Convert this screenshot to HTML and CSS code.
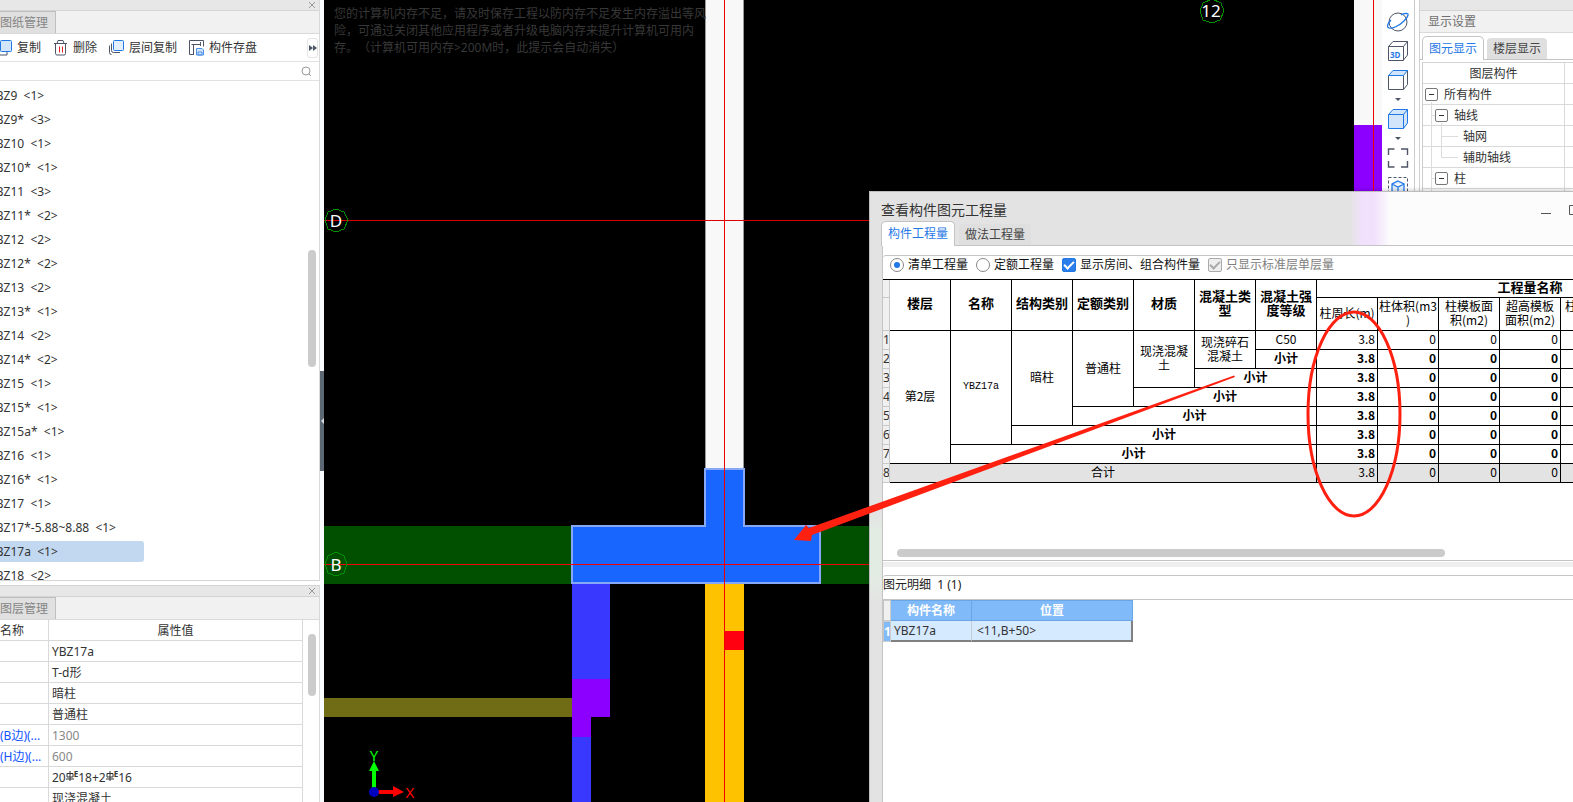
FILE: index.html
```html
<!DOCTYPE html>
<html lang="zh-CN">
<head>
<meta charset="utf-8">
<title>查看构件图元工程量</title>
<link rel="stylesheet" href="styles.css">
</head>
<body>
<div class="app">
  <aside class="left">
    <section class="pane components">
      <div class="grip"><button class="close" aria-label="关闭"><svg width="8" height="8" viewBox="0 0 8 8"><path d="M1 1L7 7M7 1L1 7"/></svg></button></div>
      <div class="tabbar"><button class="dock-tab">图纸管理</button></div>
      <div class="tools">
        <button class="tool"><svg width="16" height="16" viewBox="0 0 16 16"><path d="M5 4H1v11h10v-3" fill="none" stroke="#4d5566"/><rect x="4.500" y=".5" width="11" height="11" rx="1" fill="#d3e5fb" stroke="#1f78e6"/></svg>复制</button>
        <button class="tool"><svg width="16" height="16" viewBox="0 0 16 16" fill="none" stroke="#4d5566"><path d="M2 3.500H15M5 3.500L6 .5h5l1 3M3.500 3.500v10q0 1.500 1.500 1.500h7q1.500 0 1.500-1.500v-10"/><path d="M7.500 6.500v6M10.500 6.500v6" stroke="#e02020"/></svg>删除</button>
        <button class="tool"><svg width="16" height="16" viewBox="0 0 16 16" fill="none" stroke="#4d5566"><path d="M1.500 5.500v7q0 2 2 2M3.500 3.500v7q0 2 2 2h6.500"/><rect x="5.500" y=".5" width="10" height="10" rx="1" fill="#e4effd" stroke="#1f78e6"/></svg>层间复制</button>
        <button class="tool"><svg width="16" height="16" viewBox="0 0 16 16" fill="none" stroke="#4d5566"><path d="M6 14.500H1.500v-14h14v6M5.500 14V4M3.500 4.500h9M12.500 2v4"/><path d="M8.500 8.500h5.500l1.500 1.500v5h-7zM10 12h4v3h-4z" fill="#d3e5fb" stroke="#4a90e8"/></svg>构件存盘</button>
        <button class="more" aria-label="更多"><svg width="8" height="6" viewBox="0 0 8 6"><path d="M0 0L4 3L0 6zM4 0L8 3L4 6z" fill="#4d5566"/></svg></button>
      </div>
      <div class="search"><input type="text" aria-label="搜索构件"><svg width="11" height="11" viewBox="0 0 11 11" fill="none" stroke="#999"><circle cx="5" cy="5" r="4"/><path d="M8 8L10 10"/></svg></div>
      <div class="list-wrap">
        <ul class="list">
          <li>YBZ9  &lt;1&gt;</li><li>YBZ9*  &lt;3&gt;</li><li>YBZ10  &lt;1&gt;</li><li>YBZ10*  &lt;1&gt;</li><li>YBZ11  &lt;3&gt;</li><li>YBZ11*  &lt;2&gt;</li><li>YBZ12  &lt;2&gt;</li><li>YBZ12*  &lt;2&gt;</li><li>YBZ13  &lt;2&gt;</li><li>YBZ13*  &lt;1&gt;</li><li>YBZ14  &lt;2&gt;</li><li>YBZ14*  &lt;2&gt;</li><li>YBZ15  &lt;1&gt;</li><li>YBZ15*  &lt;1&gt;</li><li>YBZ15a*  &lt;1&gt;</li><li>YBZ16  &lt;1&gt;</li><li>YBZ16*  &lt;1&gt;</li><li>YBZ17  &lt;1&gt;</li><li>YBZ17*-5.88~8.88  &lt;1&gt;</li><li class="selected">YBZ17a  &lt;1&gt;</li><li>YBZ18  &lt;2&gt;</li>
        </ul>
        <div class="thumb list-thumb"></div>
      </div>
    </section>
    <section class="pane props">
      <div class="grip"><button class="close" aria-label="关闭"><svg width="8" height="8" viewBox="0 0 8 8"><path d="M1 1L7 7M7 1L1 7"/></svg></button></div>
      <div class="tabbar"><button class="dock-tab">图层管理</button></div>
      <div class="props-wrap">
        <table class="prop-table">
          <colgroup><col class="c-name"><col></colgroup>
          <tr><th class="first">名称</th><th>属性值</th></tr>
          <tr><td></td><td>YBZ17a</td></tr>
          <tr><td></td><td>T-d形</td></tr>
          <tr><td></td><td>暗柱</td></tr>
          <tr><td></td><td>普通柱</td></tr>
          <tr><td class="key">(B边)(...</td><td class="dim">1300</td></tr>
          <tr><td class="key">(H边)(...</td><td class="dim">600</td></tr>
          <tr><td></td><td>20<svg class="rebar" width="8" height="10" viewBox="0 0 8 10"><path d="M4 0V10M1 2.500h6v3.500h-6zM0 8h8"/></svg><sup>E</sup>18+2<svg class="rebar" width="8" height="10" viewBox="0 0 8 10"><path d="M4 0V10M1 2.500h6v3.500h-6zM0 8h8"/></svg><sup>E</sup>16</td></tr>
          <tr><td></td><td>现浇混凝土</td></tr>
        </table>
        <div class="thumb prop-thumb"></div>
      </div>
    </section>
  </aside>
  <div class="splitter"><button class="handle" aria-label="收起"><svg width="4" height="6" viewBox="0 0 4 6"><path d="M4 0L1 3L4 6z" fill="#d5d9dd"/></svg></button></div>

  <main class="canvas">
    <svg class="drawing" width="100%" height="100%" shape-rendering="crispEdges">
      <rect x="0" y="526" width="600" height="58" fill="#005000"/>
      <rect x="381" y="0" width="39" height="470" fill="#f8f8f8"/>
      <path d="M381.500 0V470M419.500 0V470" stroke="#999"/>
      <rect x="1030" y="0" width="29" height="126" fill="#f8f8f8"/>
      <rect x="1030" y="125" width="29" height="130" fill="#8b00ff"/>
      <rect x="248" y="583" width="38" height="97" fill="#3838ff"/>
      <path d="M248 679h38v38h-19v20h-19z" fill="#8b00ff"/>
      <rect x="248" y="737" width="19" height="300" fill="#3838ff"/>
      <rect x="0" y="698" width="248" height="19" fill="#6f6c15"/>
      <rect x="381" y="583" width="39" height="500" fill="#ffc200"/>
      <rect x="400" y="631" width="20" height="19" fill="#ff0010"/>
      <path d="M248 526H381V469H420V526H496V583H248z" fill="#1966ff" stroke="#86a8f7" stroke-width="2"/>
      <path d="M0 220.500H600" stroke="#d80000"/><path d="M0 564.500H600M400.500 0V1000M1049.500 0V255" stroke="#f00000"/>
      <g fill="none" stroke="#009000">
        <path d="M1 220L4 212L12 209L20 212L24 220L20 229L12 232L4 229zM1 564L4 556L12 552L20 556L23 564L20 573L12 576L4 573zM876 11L879 3L888-1L897 3L900 11L896 20L888 23L879 20z"/>
      </g>
      <g class="axis-label"><text x="12" y="227">D</text><text x="12" y="571">B</text><text x="887" y="17">12</text></g>
      <g shape-rendering="auto">
        <path d="M48 792V771H45L50 761L55 771H52V792z" fill="#0f0"/>
        <path d="M50 790H69V786L80 792L69 797V794H50z" fill="#f00"/>
        <circle cx="50" cy="792" r="5" fill="#0000bf"/>
        <text class="axis-y" x="50" y="761">Y</text>
        <text class="axis-x" x="86" y="798">X</text>
      </g>
    </svg>
    <p class="warning">您的计算机内存不足，请及时保存工程以防内存不足发生内存溢出等风险，可通过关闭其他应用程序或者升级电脑内存来提升计算机可用内存。（计算机可用内存&gt;200M时，此提示会自动消失）</p>
  </main>

  <nav class="viewbar">
    <button aria-label="动态观察"><svg width="22" height="22" viewBox="0 0 22 22" fill="none" stroke="#4d5566"><circle cx="11" cy="11" r="9"/><path d="M4 9C1 12-1 16 2 17S12 15 17 10S22 2 19 2.500S15 3 14 4" stroke="#1f78e6" stroke-width="1.300"/></svg></button>
    <button aria-label="三维"><svg width="22" height="22" viewBox="0 0 22 22" fill="none" stroke="#4d5566"><path d="M1.500 6.500h15v14h-15zM1.500 6.500L6 1.500h14.500v13.500L16.500 20M16.500 6.500L20.500 1.500"/><text class="cube-text" x="3" y="18">3D</text></svg></button>
    <button aria-label="俯视"><svg width="22" height="22" viewBox="0 0 22 22" fill="none" stroke="#4d5566"><path d="M1.500 6.500h15v14h-15zM16.500 20.500L20.500 15.500V1.500"/><path d="M1.500 6.500L6 1.500h14.500L16.500 6.500z" fill="#d3e5fb" stroke="#1f78e6"/></svg></button>
    <i class="drop"></i>
    <button aria-label="着色"><svg width="22" height="22" viewBox="0 0 22 22" fill="#d3e5fb" stroke="#1f78e6"><path d="M1.500 6.500L6 1.500h14.500v13.500L16.500 20.500h-15zM1.500 6.500h15v14M16.500 6.500L20.500 1.500"/></svg></button>
    <i class="drop"></i>
    <button aria-label="全屏"><svg width="22" height="22" viewBox="0 0 22 22" fill="none" stroke="#4d5566" stroke-width="1.400"><path d="M1.500 8V2h6M14 2h6.500v6M20.500 14v6H14M7.500 20h-6v-6"/></svg></button>
    <button aria-label="选择"><svg width="22" height="22" viewBox="0 0 22 22" fill="none" stroke="#4d5566"><rect x="1.500" y="1.500" width="19" height="19" stroke-dasharray="3 2"/><path d="M11 5L17 8v7l-6 3l-6-3V8zM5 8l6 3l6-3M11 11v7" fill="#e4effd" stroke="#1f78e6" stroke-width="1.300"/></svg></button>
  </nav>

  <aside class="right">
    <div class="grip"></div>
    <h2 class="right-title">显示设置</h2>
    <div class="tabs right-tabs"><button class="tab active">图元显示</button><button class="tab">楼层显示</button></div>
    <div class="tree-wrap">
      <table class="tree">
        <colgroup><col class="c-tree"><col></colgroup>
        <tr><th>图层构件</th><th></th></tr>
        <tr><td><span class="node l1"><button class="toggle" aria-label="折叠"></button>所有构件</span></td><td></td></tr>
        <tr><td><span class="node l2"><button class="toggle" aria-label="折叠"></button>轴线</span></td><td></td></tr>
        <tr><td><span class="node l3">轴网</span></td><td></td></tr>
        <tr><td><span class="node l3">辅助轴线</span></td><td></td></tr>
        <tr><td><span class="node l2"><button class="toggle" aria-label="折叠"></button>柱</span></td><td></td></tr>
        <tr><td></td><td></td></tr>
      </table>
      <svg class="guides" width="40" height="130"><path d="M8.500 39V130M9 52.500H12M9 115.500H12M18.500 60V94.500H35M19 73.500H35" fill="none" stroke="#dcdcdc"/></svg>
    </div>
  </aside>
</div>

<section class="dialog" role="dialog" aria-labelledby="dialog-title">
  <header class="dialog-head">
    <h1 id="dialog-title">查看构件图元工程量</h1>
    <div class="win"><button aria-label="最小化"><svg width="10" height="10" viewBox="0 0 10 10"><path d="M0 8.500H10"/></svg></button><button aria-label="最大化"><svg width="10" height="10" viewBox="0 0 10 10"><path d="M.5.5h9v9h-9z"/></svg></button></div>
  </header>
  <div class="dialog-tabs"><button class="tab active">构件工程量</button><button class="tab">做法工程量</button></div>
  <div class="dialog-body">
    <div class="box">
      <div class="options">
        <label><input type="radio" name="kind" checked>清单工程量</label>
        <label><input type="radio" name="kind">定额工程量</label>
        <label><input type="checkbox" checked>显示房间、组合构件量</label>
        <label class="off"><input type="checkbox" checked disabled>只显示标准层单层量</label>
      </div>
      <div class="table-wrap">
        <table class="qty">
          <colgroup><col class="c-num"><col><col><col><col><col><col><col><col><col><col><col><col><col><col></colgroup>
          <tr class="h1"><th class="n"></th><th rowspan="2">楼层</th><th rowspan="2">名称</th><th rowspan="2">结构类别</th><th rowspan="2">定额类别</th><th rowspan="2">材质</th><th rowspan="2">混凝土类<br>型</th><th rowspan="2">混凝土强<br>度等级</th><th colspan="7" class="group">工程量名称</th></tr>
          <tr class="h2"><th class="n"></th><td>柱周长(m)</td><td>柱体积(m3<br>)</td><td>柱模板面<br>积(m2)</td><td>超高模板<br>面积(m2)</td><td>柱数量(根<br>)</td><td></td><td></td></tr>
          <tr><th class="n">1</th><td rowspan="7">第2层</td><td rowspan="6" class="code">YBZ17a</td><td rowspan="5">暗柱</td><td rowspan="4">普通柱</td><td rowspan="3">现浇混凝<br>土</td><td rowspan="2">现浇碎石<br>混凝土</td><td>C50</td><td class="v">3.8</td><td class="v">0</td><td class="v">0</td><td class="v">0</td><td class="v">0</td><td></td><td></td></tr>
          <tr class="sub"><th class="n">2</th><td>小计</td><td class="v">3.8</td><td class="v">0</td><td class="v">0</td><td class="v">0</td><td class="v">0</td><td></td><td></td></tr>
          <tr class="sub"><th class="n">3</th><td colspan="2">小计</td><td class="v">3.8</td><td class="v">0</td><td class="v">0</td><td class="v">0</td><td class="v">0</td><td></td><td></td></tr>
          <tr class="sub"><th class="n">4</th><td colspan="3">小计</td><td class="v">3.8</td><td class="v">0</td><td class="v">0</td><td class="v">0</td><td class="v">0</td><td></td><td></td></tr>
          <tr class="sub"><th class="n">5</th><td colspan="4">小计</td><td class="v">3.8</td><td class="v">0</td><td class="v">0</td><td class="v">0</td><td class="v">0</td><td></td><td></td></tr>
          <tr class="sub"><th class="n">6</th><td colspan="5">小计</td><td class="v">3.8</td><td class="v">0</td><td class="v">0</td><td class="v">0</td><td class="v">0</td><td></td><td></td></tr>
          <tr class="sub"><th class="n">7</th><td colspan="6">小计</td><td class="v">3.8</td><td class="v">0</td><td class="v">0</td><td class="v">0</td><td class="v">0</td><td></td><td></td></tr>
          <tr class="total"><th class="n">8</th><td colspan="7">合计</td><td class="v">3.8</td><td class="v">0</td><td class="v">0</td><td class="v">0</td><td class="v">0</td><td></td><td></td></tr>
        </table>
      </div>
      <div class="hscroll"><div class="thumb"></div></div>
    </div>
    <div class="divider"></div>
    <div class="box detail">
      <p class="detail-title">图元明细&nbsp; 1 (1)</p>
      <table class="detail-table">
        <tr><th class="dn"></th><th class="da">构件名称</th><th class="db">位置</th></tr>
        <tr><th class="dn on">1</th><td>YBZ17a</td><td>&lt;11,B+50&gt;</td></tr>
      </table>
    </div>
  </div>
</section>

<svg class="markup" width="100%" height="100%">
  <ellipse cx="1354" cy="414" rx="46" ry="102" fill="none" stroke="#ff2010" stroke-width="3"/>
  <path d="M1234 375.500L1235 377L812 535L811 541L794 540L806 525L809 528z" fill="#ff2010"/>
</svg>
</body>
</html>
```
FILE: styles.css
```css
* { box-sizing: border-box; }
html, body { height: 100%; }
body {
  margin: 0;
  position: relative;
  overflow: hidden;
  font: 12px/18px "Noto Sans", "Noto Sans CJK SC", sans-serif;
  color: #333;
  background: #fff;
}
button, input { font: inherit; color: inherit; margin: 0; padding: 0; border: 0; background: none; }
svg { display: block; flex: none; }
table { border-collapse: separate; border-spacing: 0; table-layout: fixed; }
h1, h2, p, ul { margin: 0; padding: 0; font-weight: normal; }
th { font-weight: normal; }
th, td { padding: 0; white-space: nowrap; overflow: hidden; }

.app { display: flex; height: 100%; overflow: hidden; }

/* left docks */
.left { flex: none; width: 320px; display: flex; flex-direction: column; gap: 4px; background: #fff; }
.pane { display: flex; flex-direction: column; border-right: 1px solid #d9d9d9; overflow: hidden; }
.components { flex: none; border-bottom: 1px solid #d4d4d4; }
.props { flex: 1; min-height: 0; border-top: 1px solid #d4d4d4; }
.grip { flex: none; height: 11px; background: #e7e7e7; border-bottom: 1px solid #d4d4d4; display: flex; justify-content: flex-end; }
.close { width: 14px; height: 10px; display: grid; place-items: center; stroke: #999; }
.tabbar { flex: none; height: 23px; background: #f1f1f1; border-bottom: 1px solid #d9d9d9; display: flex; }
.dock-tab { width: 56px; background: #e0e0e0; border: 1px solid #bfbfbf; border-left: 0; border-bottom: 0; text-align: left; color: #858585; }
.tools { height: 28px; display: flex; align-items: center; gap: 11px; margin-left: -4px; border-bottom: 1px solid #e1e1e1; }
.tool { display: flex; align-items: center; gap: 5px; white-space: nowrap; }
.more { width: 11px; height: 20px; margin-left: auto; margin-right: 1px; border: 1px solid #e4e4e4; border-radius: 3px; display: grid; place-items: center; }
.search { height: 19px; display: flex; align-items: center; padding-right: 7px; border-bottom: 1px solid #e1e1e1; }
.search input { flex: 1; min-width: 0; outline: 0; }
.list-wrap { position: relative; height: 499px; overflow: hidden; padding-top: 4px; }
.list { list-style: none; }
.list li { height: 21px; width: 144px; margin-bottom: 3px; line-height: 22px; text-indent: -11px; white-space: pre; border-radius: 0 3px 3px 0; }
.list .selected { background: #c1d8f0; }
.thumb { background: #cbcbcb; border-radius: 4px; }
.list-thumb { position: absolute; right: 3px; top: 169px; width: 8px; height: 117px; }
.props-wrap { display: flex; flex: 1; min-height: 0; overflow: hidden; }
.prop-table { width: 303px; flex: none; align-self: flex-start; }
.c-name { width: 49px; }
.prop-table th, .prop-table td { height: 21px; line-height: 18px; padding-top: 2px; border-right: 1px solid #d9d9d9; border-bottom: 1px solid #d9d9d9; }
.prop-table td + td { padding-left: 3px; }
.prop-table .first { text-align: left; }
.key { color: #1155ff; }
.prop-table .dim { color: #888; }
.rebar { display: inline-block; vertical-align: 1px; fill: none; stroke: #333; }
sup { font-size: 8px; line-height: 8px; vertical-align: 5px; font-weight: bold; }
.prop-thumb { width: 8px; height: 62px; margin: 14px 0 0 5px; }

.splitter { flex: none; width: 4px; background: #fafcff; padding-top: 371px; }
.handle { width: 4px; height: 100px; background: #5c6873; display: grid; place-items: center; }

/* drawing area */
.canvas { position: relative; flex: 1; min-width: 0; background: #000; overflow: hidden; }
.drawing { position: absolute; inset: 0; }
.axis-label { fill: #fff; font-size: 17px; text-anchor: middle; }
.axis-x, .axis-y { font-size: 15px; text-anchor: middle; fill: #f00; }
.axis-y { fill: #0f0; }
.warning { position: absolute; left: 10px; top: 5px; width: 376px; line-height: 17px; color: #383838; text-spacing-trim: space-all; }

.viewbar { flex: none; width: 33px; padding-top: 11px; display: flex; flex-direction: column; align-items: center; gap: 7px; background: #fff; border-right: 1px solid #ccc; overflow: hidden; }
.drop { border: 3px solid transparent; border-top-color: #4d5566; border-bottom: 0; }
.cube-text { font-size: 8px; font-weight: bold; fill: #1f78e6; stroke: none; }

/* right dock */
.right { flex: none; width: 154px; margin-left: 4px; border-left: 1px solid #d0d0d0; display: flex; flex-direction: column; overflow: hidden; background: #fff; }
.right-title { font-size: 12px; height: 22px; line-height: 21px; padding-left: 8px; background: #f1f1f1; border-bottom: 1px solid #d9d9d9; color: #707070; }
.tabs { display: flex; align-items: flex-end; gap: 3px; border-bottom: 1px solid #c4c4c4; }
.tab { padding: 0 6px; background: #dfdfdf; color: #444; border-radius: 4px 4px 0 0; white-space: nowrap; }
.tab.active { background: #fff; color: #1f78e6; border: 1px solid #c4c4c4; border-bottom: 0; border-radius: 5px 5px 0 0; }
.right-tabs { height: 27px; padding-left: 2px; }
.right-tabs .tab { height: 21px; }
.right-tabs .active { height: 24px; margin-bottom: -1px; }
.tree-wrap { position: relative; margin: 2px 0 0 2px; border-top: 1px solid #d4d4d4; border-left: 1px solid #ccc; }
.tree { width: 160px; }
.c-tree { width: 142px; }
.tree th, .tree td { height: 21px; line-height: 18px; border-right: 1px solid #d9d9d9; border-bottom: 1px solid #d9d9d9; }
.tree th { padding-top: 2px; }
.node { display: flex; align-items: center; gap: 6px; height: 20px; line-height: 20px; padding-top: 1px; }
.l1 { padding-left: 2px; }
.l2 { padding-left: 12px; }
.l3 { padding-left: 40px; }
.toggle { position: relative; z-index: 1; width: 13px; height: 13px; border: 1px solid #777; border-radius: 2px; display: grid; place-items: center; background: #fff; }
.toggle::before { content: ""; width: 5px; height: 1px; background: #333; }
.guides { position: absolute; left: 0; top: 0; }

/* floating window */
.dialog {
  position: absolute; left: 869px; top: 191px; right: 0; bottom: 0;
  display: flex; flex-direction: column; overflow: hidden;
  border: solid #bdbdbd; border-width: 1px 0 0 1px; padding-left: 12px;
  background:
    linear-gradient(#e4ece400 320px, #e3ece3 340px, #e3ece3 385px, #e4ece400 410px) 0 0 / 12px 100% no-repeat,
    linear-gradient(90deg, #e3e3e3 480px, #f1e1fc 492px, #f1e1fc 504px, #fcfcfd 520px);
  box-shadow: 0 -1px 4px #0003;
}
.dialog-head { flex: none; height: 29px; display: flex; justify-content: space-between; }
.dialog-head h1 { font-size: 14px; line-height: 36px; margin-left: -1px; }
.win { display: flex; gap: 18px; margin: 13px -6px 0 0; fill: none; stroke: #555; }
.win button { height: 10px; }
.dialog-tabs { flex: none; height: 25px; margin-left: -1px; display: flex; align-items: flex-end; gap: 4px; border-bottom: 1px solid #c4c4c4; }
.dialog-tabs .tab { height: 21px; }
.dialog-tabs .active { height: 25px; margin-bottom: -1px; }
.dialog-body { flex: 1; background: #fff; border-left: 1px solid #c4c4c4; padding-top: 9px; overflow: hidden; }
.box { border-top: 1px solid #c4c4c4; border-radius: 3px 0 0 3px; }
.options { display: flex; align-items: center; gap: 8px; height: 18px; margin-bottom: 5px; padding-left: 7px; white-space: nowrap; }
.options label { display: flex; align-items: center; gap: 4px; color: #111; }
.options .off { color: #808080; }
.options input { appearance: none; width: 14px; height: 14px; border: 1px solid #888; background: #fff; display: grid; place-items: center; }
.options [type="radio"] { border-radius: 50%; }
.options [type="radio"]:checked::before { content: ""; width: 6px; height: 6px; border-radius: 50%; background: #1f78e6; }
.options [type="checkbox"] { border-radius: 2px; border-color: #1f78e6; background: #2b7de9; }
.options [type="checkbox"]::before { content: ""; width: 8px; height: 4px; border: solid #fff; border-width: 0 0 2px 2px; rotate: -45deg; margin-bottom: 3px; }
.options [type="checkbox"]:disabled { background: #eee; border-color: #aaa; }
.options [type="checkbox"]:disabled::before { border-color: #aaa; }

.table-wrap { overflow: hidden; }
.qty { width: 861px; border-top: 1px solid #000; color: #000; line-height: 14px; font-family: "Noto Sans CJK SC", sans-serif; }
.c-num { width: 7px; }
.qty th, .qty td { height: 19px; text-align: center; vertical-align: middle; padding-bottom: 2px; border: solid #000; border-width: 0 1px 1px 0; }
.qty th { font-weight: bold; font-size: 13px; padding-bottom: 5px; }
.qty .n { background: #f0f0f0; border-color: #c8c8c8; font: 12px/16px "Noto Sans", sans-serif; color: #333; text-align: left; padding-bottom: 0; }
.qty .h1 th { height: 18px; }
.qty .h1 .group { padding-bottom: 3px; }
.qty .h2 td, .qty .h2 th { height: 33px; }
.qty .code { font: 10px/14px "Liberation Mono", monospace; }
.qty .sub td { font-weight: bold; }
.qty .v { text-align: right; padding-right: 2px; }
.qty .total td { background: #e3e3e3; }
.hscroll { margin-top: 66px; padding: 0 0 3px 14px; border-bottom: 1px solid #c4c4c4; }
.hscroll .thumb { width: 81%; height: 8px; }
.divider { height: 5px; margin: 1px 0 8px; background: #efefef; }
.detail-title { height: 24px; line-height: 18px; border-bottom: 1px solid #c4c4c4; color: #222; }
.detail-table { width: 250px; border-left: 1px solid #c4c4c4; }
.detail-table th, .detail-table td { height: 21px; line-height: 18px; }
.detail-table th { background: #80baf9; color: #fff; font-weight: bold; border: 1px solid #68a6e8; border-width: 1px 1px 1px 0; }
.detail-table .dn { width: 7px; background: #f0f0f0; border-color: #ccc; }
.detail-table .on { background: #80baf9; text-align: left; }
.da { width: 81px; }
.detail-table td { background: #d5e9ff; border-bottom: 2px solid #808080; border-right: 1px solid #c8cdd3; padding: 1px 0 0 3px; }
.detail-table td:last-child { border-right: 2px solid #808080; padding-left: 5px; }

.markup { position: absolute; inset: 0; pointer-events: none; }
```
